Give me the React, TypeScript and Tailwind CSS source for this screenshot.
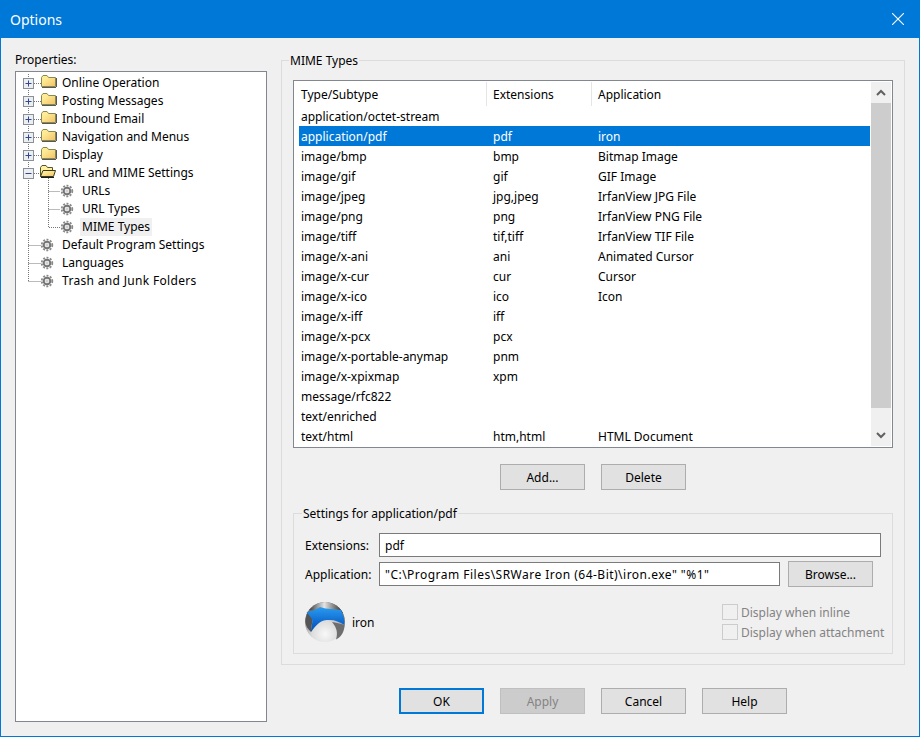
import React from "react";

const treeRows = [
  { label: "Online Operation", level: 0, icon: "folder", exp: "plus" },
  { label: "Posting Messages", level: 0, icon: "folder", exp: "plus" },
  { label: "Inbound Email", level: 0, icon: "folder", exp: "plus" },
  { label: "Navigation and Menus", level: 0, icon: "folder", exp: "plus" },
  { label: "Display", level: 0, icon: "folder", exp: "plus" },
  { label: "URL and MIME Settings", level: 0, icon: "open", exp: "minus" },
  { label: "URLs", level: 1, icon: "gear" },
  { label: "URL Types", level: 1, icon: "gear" },
  { label: "MIME Types", level: 1, icon: "gear", selected: true, lastChild: true },
  { label: "Default Program Settings", level: 0, icon: "gear" },
  { label: "Languages", level: 0, icon: "gear" },
  { label: "Trash and Junk Folders", level: 0, icon: "gear", last: true },
];

const mimeRows: [string, string, string][] = [
  ["application/octet-stream", "", ""],
  ["application/pdf", "pdf", "iron"],
  ["image/bmp", "bmp", "Bitmap Image"],
  ["image/gif", "gif", "GIF Image"],
  ["image/jpeg", "jpg,jpeg", "IrfanView JPG File"],
  ["image/png", "png", "IrfanView PNG File"],
  ["image/tiff", "tif,tiff", "IrfanView TIF File"],
  ["image/x-ani", "ani", "Animated Cursor"],
  ["image/x-cur", "cur", "Cursor"],
  ["image/x-ico", "ico", "Icon"],
  ["image/x-iff", "iff", ""],
  ["image/x-pcx", "pcx", ""],
  ["image/x-portable-anymap", "pnm", ""],
  ["image/x-xpixmap", "xpm", ""],
  ["message/rfc822", "", ""],
  ["text/enriched", "", ""],
  ["text/html", "htm,html", "HTML Document"],
];

function Gear({ cx, cy }: { cx: number; cy: number }) {
  return (
    <g>
      <circle cx={cx} cy={cy} r={5.3} fill="none" stroke="#8a8a8a" strokeWidth={1.8} strokeDasharray="2 1.4" />
      <circle cx={cx} cy={cy} r={3.3} fill="none" stroke="#757575" strokeWidth={2} />
      <circle cx={cx} cy={cy} r={1.7} fill="#cfcfcf" />
    </g>
  );
}

function Folder({ open }: { open: boolean }) {
  if (open) {
    return (
      <g>
        <path d="M24.5 12.5V3.5L26 1.5H30L31.5 3.5H36.5V12.5Z" fill="#fff0a0" stroke="#55552a" />
        <path d="M24.5 12.5L27 6.5H39.5L37.5 12.5Z" fill="url(#fg)" stroke="#3a3a1c" />
        <path d="M25 13.5H38" stroke="#1a1a1a" />
      </g>
    );
  }
  return (
    <g>
      <path d="M25.5 12.5V3.5L27 1.5H31L32.5 3.5H39.5V12.5Z" fill="url(#fg)" stroke="#8a8a50" />
      <path d="M26 13.5H40M40.5 4V13" stroke="#444" strokeWidth={0.9} />
    </g>
  );
}

function TreeRow({ row }: { row: (typeof treeRows)[number] }) {
  const child = row.level === 1;
  const dots = { stroke: "#777", strokeDasharray: "1 1", fill: "none" };
  return (
    <div className="flex h-[18px]">
      <svg width={child ? 64 : 46} height={18} className="shrink-0" viewBox={`0 0 ${child ? 64 : 46} 18`}>
        <defs>
          <linearGradient id="fg" x1="0" y1="0" x2="1" y2="1">
            <stop offset="0.3" stopColor="#fdeb96" />
            <stop offset="1" stopColor="#f2c166" />
          </linearGradient>
        </defs>
        <path d={row.last ? "M12.5 0V9.5" : "M12.5 0V18"} {...dots} />
        {child ? (
          <>
            <path d={row.lastChild ? "M32.5 0V9.5H44" : "M32.5 0V18M32.5 9.5H44"} {...dots} />
            <Gear cx={51} cy={9} />
          </>
        ) : row.icon === "gear" ? (
          <>
            <path d="M12.5 9.5H25" {...dots} />
            <Gear cx={31} cy={9} />
          </>
        ) : (
          <>
            <path d="M18 9.5H25" {...dots} />
            {row.icon === "open" && <path d="M32.5 14V18" {...dots} />}
            <rect x={7.5} y={4.5} width={10} height={10} fill="#eceef2" stroke="#8a8f98" />
            <path d="M9.5 9.5H15.5" stroke="#2f4a8a" />
            {row.exp === "plus" && <path d="M12.5 6.5V12.5" stroke="#2f4a8a" />}
            <Folder open={row.icon === "open"} />
          </>
        )}
      </svg>
      <span
        className={`h-[18px] leading-[18px] whitespace-nowrap ${child ? "px-[2px]" : ""} ${row.selected ? "bg-[#f0f0f0]" : ""} ${
          row.last ? "tracking-[0.32px]" : ""
        }`}
      >
        {row.label}
      </span>
    </div>
  );
}

function Btn({ children, kind }: { children: React.ReactNode; kind?: "default" | "disabled" }) {
  const cls =
    kind === "default"
      ? "border-2 border-[#0078d7] bg-[#e1e1e1] text-black"
      : kind === "disabled"
      ? "border border-[#bfbfbf] bg-[#cccccc] text-[#838383]"
      : "border border-[#adadad] bg-[#e1e1e1] text-black";
  return <div className={`flex h-[26px] w-[85px] shrink-0 items-center justify-center pt-px ${cls}`}>{children}</div>;
}

function IronLogo() {
  return (
    <svg width={40} height={40} viewBox="0 0 40 40" className="shrink-0">
      <defs>
        <radialGradient id="ball" cx="0.5" cy="0.8" r="0.6">
          <stop offset="0" stopColor="#f8f8f8" />
          <stop offset="0.55" stopColor="#dcdcdc" />
          <stop offset="0.9" stopColor="#9a9a9a" />
          <stop offset="1" stopColor="#707070" />
        </radialGradient>
        <linearGradient id="hood" x1="0" y1="0" x2="1" y2="0">
          <stop offset="0" stopColor="#3c3c3c" />
          <stop offset="0.45" stopColor="#e4e4e4" />
          <stop offset="0.7" stopColor="#8c8c8c" />
          <stop offset="1" stopColor="#2e2e2e" />
        </linearGradient>
        <linearGradient id="blue" x1="0" y1="0" x2="0" y2="1">
          <stop offset="0" stopColor="#2a9cf0" />
          <stop offset="0.6" stopColor="#0f6ad0" />
          <stop offset="1" stopColor="#0a4fa8" />
        </linearGradient>
      </defs>
      <circle cx={20} cy={20} r={20} fill="url(#ball)" />
      <path d="M4 8C9 3 14 0 20 0C28 0 34 4 38 11L27 9H15Z" fill="url(#hood)" />
      <path d="M0.5 20C0.5 16 1.5 13 3 10L7.5 17L6 30C3 27 0.5 24 0.5 20Z" fill="#555" />
      <path d="M1.5 10C7 9.5 11 7.5 15 5C22 7.5 30 7 36 8C38 12 39.5 17 39.5 23C35 20 30 18 25 18C20 18 17 18.5 14 21C11 23.5 8 27 6 30C6 25 8 21 7 17Z" fill="url(#blue)" />
      <path d="M39.5 23C39.5 30 36 35 31 37.5C33 31 32 26 27 20C31 20.5 35 21.5 39.5 23Z" fill="#6e6e6e" />
    </svg>
  );
}

function Check({ label }: { label: string }) {
  return (
    <div className="flex h-[16px] items-center">
      <div className="h-[16px] w-[16px] shrink-0 border border-[#cccccc]" />
      <span className="ml-[3px] pt-px text-[#838383] whitespace-nowrap">{label}</span>
    </div>
  );
}

export default function App() {
  return (
    <div
      className="flex h-[737px] w-[920px] flex-col overflow-hidden border-x border-b border-[#0078d7] bg-[#f0f0f0] text-[12px] text-black"
      style={{ fontFamily: '"Noto Sans", sans-serif' }}
    >
      <div className="-mx-px flex h-[38px] shrink-0 items-center justify-between bg-[#0078d7] pl-[10px] pr-[16px] text-[14px] text-white">
        <span>Options</span>
        <svg width={12} height={12} viewBox="0 0 12 12">
          <path d="M0 0L12 12M12 0L0 12" stroke="#fff" strokeWidth={1.1} fill="none" />
        </svg>
      </div>
      <div className="flex gap-[14px] pl-[14px] pt-[15px]">
        <div className="w-[252px] shrink-0">
          <div className="h-[14px] leading-[14px]">Properties:</div>
          <div className="mt-[4px] h-[651px] border border-[#828790] bg-white pt-[2px]">
            {treeRows.map((r) => (
              <TreeRow key={r.label} row={r} />
            ))}
          </div>
        </div>
        <div className="w-[624px] shrink-0">
          <fieldset className="h-[612px] border border-[#dcdcdc] px-[11px]">
            <legend className="ml-[-4px] px-[1px] leading-[14px]">
              <span className="block translate-y-px">MIME Types</span>
            </legend>
            <div className="mt-[13px] flex h-[368px] w-[600px] border border-[#828790] bg-white py-[1px] pl-[5px]">
              <div className="w-[571px] shrink-0">
                <div className="flex h-[24px] items-start">
                  <div className="h-full w-[188px] border-r border-[#e5e5e5] pl-[2px] leading-[25px]">Type/Subtype</div>
                  <div className="h-full w-[105px] border-r border-[#e5e5e5] pl-[6px] leading-[25px]">Extensions</div>
                  <div className="h-full pl-[6px] leading-[25px]">Application</div>
                </div>
                {mimeRows.map(([a, b, c], i) => (
                  <div key={a} className={`flex h-[20px] items-center pt-px leading-[19px] ${i === 1 ? "bg-[#0078d7] text-white" : ""}`}>
                    <div className="w-[192px] shrink-0 whitespace-nowrap pl-[2px]">{a}</div>
                    <div className="w-[105px] shrink-0 pl-[2px]">{b}</div>
                    <div className="whitespace-nowrap pl-[2px]">{c}</div>
                  </div>
                ))}
              </div>
              <div className="ml-px flex w-[20px] shrink-0 flex-col bg-[#f0f0f0]">
                <div className="flex h-[21px] items-center justify-center">
                  <svg width={10} height={7} viewBox="0 0 10 7">
                    <path d="M1 6L5 2L9 6" fill="none" stroke="#606060" strokeWidth={2} />
                  </svg>
                </div>
                <div className="h-[305px] bg-[#cdcdcd]" />
                <div className="flex flex-1 flex-col justify-end">
                  <div className="flex h-[21px] items-center justify-center">
                    <svg width={10} height={7} viewBox="0 0 10 7">
                      <path d="M1 1L5 5L9 1" fill="none" stroke="#606060" strokeWidth={2} />
                    </svg>
                  </div>
                </div>
              </div>
            </div>
            <div className="mt-[16px] flex justify-center gap-[16px]">
              <Btn>Add...</Btn>
              <Btn>Delete</Btn>
            </div>
            <fieldset className="mt-[16px] h-[148px] w-[600px] border border-[#dcdcdc] px-[11px]">
              <legend className="ml-[-3px] px-[1px] leading-[14px]">
                <span className="block translate-y-px">Settings for application/pdf</span>
              </legend>
              <div className="mt-[13px] flex h-[24px] items-center">
                <span className="w-[74px] shrink-0 pt-px">Extensions:</span>
                <div className="h-[24px] w-[502px] border border-[#7a7a7a] bg-white pl-[5px] pt-px leading-[22px]">pdf</div>
              </div>
              <div className="mt-[4px] flex h-[26px] items-center">
                <span className="w-[74px] shrink-0 pt-px">Application:</span>
                <div className="h-[24px] w-[401px] whitespace-nowrap border border-[#7a7a7a] bg-white pl-[5px] pt-px leading-[22px] tracking-[0.48px]">
                  "C:\Program Files\SRWare Iron (64-Bit)\iron.exe" "%1"
                </div>
                <div className="ml-[8px]">
                  <Btn>Browse...</Btn>
                </div>
              </div>
              <div className="mt-[15px] flex items-center">
                <IronLogo />
                <span className="ml-[7px] flex-1 pt-[2px]">iron</span>
                <div className="flex w-[159px] flex-col gap-[4px]">
                  <Check label="Display when inline" />
                  <Check label="Display when attachment" />
                </div>
              </div>
            </fieldset>
          </fieldset>
          <div className="ml-[118px] mt-[23px] flex gap-[16px]">
            <Btn kind="default">OK</Btn>
            <Btn kind="disabled">Apply</Btn>
            <Btn>Cancel</Btn>
            <Btn>Help</Btn>
          </div>
        </div>
      </div>
    </div>
  );
}
